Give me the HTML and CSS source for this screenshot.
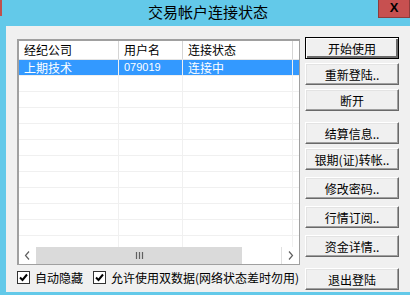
FILE: index.html
```html
<!DOCTYPE html>
<html lang="zh-CN">
<head>
  <meta charset="UTF-8">
  <title>交易帐户连接状态</title>
  <link rel="stylesheet" href="styles.css">
</head>
<body>
  <div class="window">
    <div class="titlebar">
      <span class="edge"></span>
      <span class="title">交易帐户连接状态</span>
      <span class="close">X</span>
    </div>
    <div class="client">
      <div class="main">
        <div class="list">
          <div class="lv-head">
            <span class="cell c1">经纪公司</span>
            <span class="cell c2">用户名</span>
            <span class="cell c3">连接状态</span>
            <span class="cell c4"></span>
          </div>
          <div class="lv-body">
            <div class="lv-row selected">
              <span class="cell c1">上期技术</span>
              <span class="cell c2 num">079019</span>
              <span class="cell c3">连接中</span>
              <span class="cell c4"></span>
            </div>
            <div class="lv-row"><span class="cell c1"></span><span class="cell c2"></span><span class="cell c3"></span><span class="cell c4"></span></div>
            <div class="lv-row"><span class="cell c1"></span><span class="cell c2"></span><span class="cell c3"></span><span class="cell c4"></span></div>
            <div class="lv-row"><span class="cell c1"></span><span class="cell c2"></span><span class="cell c3"></span><span class="cell c4"></span></div>
            <div class="lv-row"><span class="cell c1"></span><span class="cell c2"></span><span class="cell c3"></span><span class="cell c4"></span></div>
            <div class="lv-row"><span class="cell c1"></span><span class="cell c2"></span><span class="cell c3"></span><span class="cell c4"></span></div>
            <div class="lv-row"><span class="cell c1"></span><span class="cell c2"></span><span class="cell c3"></span><span class="cell c4"></span></div>
            <div class="lv-row"><span class="cell c1"></span><span class="cell c2"></span><span class="cell c3"></span><span class="cell c4"></span></div>
            <div class="lv-row"><span class="cell c1"></span><span class="cell c2"></span><span class="cell c3"></span><span class="cell c4"></span></div>
            <div class="lv-row"><span class="cell c1"></span><span class="cell c2"></span><span class="cell c3"></span><span class="cell c4"></span></div>
            <div class="lv-row"><span class="cell c1"></span><span class="cell c2"></span><span class="cell c3"></span><span class="cell c4"></span></div>
            <div class="lv-row"><span class="cell c1"></span><span class="cell c2"></span><span class="cell c3"></span><span class="cell c4"></span></div>
          </div>
          <div class="hscroll">
            <span class="sb-btn">
              <svg width="7" height="9" viewBox="0 0 7 9"><path d="M5 0.5 L1.5 4.5 L5 8.5" fill="none" stroke="#606060" stroke-width="1.2"/></svg>
            </span>
            <span class="sb-thumb">
              <svg width="9" height="7" viewBox="0 0 9 7"><path d="M1.5 0v7M4.5 0v7M7.5 0v7" stroke="#606060" stroke-width="1.2"/></svg>
            </span>
            <span class="sb-track"></span>
            <span class="sb-btn right">
              <svg width="7" height="9" viewBox="0 0 7 9"><path d="M2 0.5 L5.5 4.5 L2 8.5" fill="none" stroke="#606060" stroke-width="1.2"/></svg>
            </span>
          </div>
        </div>
        <div class="options">
          <label class="check">
            <span class="box"><svg width="11" height="11" viewBox="0 0 11 11"><path d="M2 5.5 L4.5 8 L9 2.5" fill="none" stroke="#000" stroke-width="2"/></svg></span>
            自动隐藏
          </label>
          <label class="check">
            <span class="box"><svg width="11" height="11" viewBox="0 0 11 11"><path d="M2 5.5 L4.5 8 L9 2.5" fill="none" stroke="#000" stroke-width="2"/></svg></span>
            允许使用双数据(网络状态差时勿用)
          </label>
        </div>
      </div>
      <div class="buttons">
        <button class="btn default">开始使用</button>
        <button class="btn mt-s">重新登陆..</button>
        <button class="btn mt-s">断开</button>
        <button class="btn mt-l">结算信息..</button>
        <button class="btn mt-s">银期(证)转帐..</button>
        <button class="btn mt-m">修改密码..</button>
        <button class="btn mt-m">行情订阅..</button>
        <button class="btn mt-m">资金详情..</button>
        <button class="btn mt-l">退出登陆</button>
      </div>
    </div>
  </div>
</body>
</html>
```

FILE: styles.css
```css
body {
  margin: 0;
  overflow: hidden;
  font-family: "Noto Sans CJK SC", "Liberation Sans", sans-serif;
  font-size: 12px;
  color: #000;
}

.window {
  width: 410px;
  height: 295px;
  background-color: #63c9e9;
  display: flex;
  flex-direction: column;
}

.titlebar {
  height: 26px;
  flex-shrink: 0;
  display: grid;
  grid-template-columns: 1fr auto 1fr;
  align-items: start;
}

.edge {
  width: 2px;
  height: 16px;
  background-color: #c0504d;
}

.title {
  font-size: 15px;
  line-height: 23px;
  padding-left: 6px;
}

.close {
  justify-self: end;
  width: 32px;
  height: 18px;
  box-sizing: border-box;
  background-color: #c75050;
  border: 1px solid #8c3c3c;
  border-top: none;
  text-align: center;
  font-family: "Liberation Sans", sans-serif;
  font-weight: bold;
  font-size: 13px;
  line-height: 16px;
}

.client {
  flex: 1;
  margin: 0 0 3px 6px;
  background-color: #f0f0f0;
  display: flex;
  gap: 5px;
  padding: 13px 0 0 11px;
}

.main {
  width: 283px;
}

.list {
  height: 226px;
  box-sizing: border-box;
  border: 1px solid #a0a0a0;
  box-shadow: inset 1px 1px #a0a0a0;
  padding: 1px 0 0 1px;
  background-color: #fff;
  display: flex;
  flex-direction: column;
}

.lv-head,
.lv-row {
  display: flex;
  box-sizing: border-box;
}

.lv-head {
  height: 19px;
  border-bottom: 1px solid #e5e5e5;
  line-height: 18px;
}

.lv-head .cell {
  border-right-color: #d5d5d5;
}

.cell {
  box-sizing: border-box;
  padding-left: 5px;
  border-right: 1px solid #f0f0f0;
  white-space: nowrap;
  overflow: hidden;
}

.c1 { width: 100px; }
.c2 { width: 64px; }
.c3 { width: 110px; }
.c4 { flex: 1; border-right: none; }

.lv-body {
  flex: 1;
  overflow: hidden;
}

.lv-row {
  height: 16px;
  border-bottom: 1px solid #f0f0f0;
  line-height: 15px;
}

.lv-row.selected {
  background-color: #3399ff;
  color: #fff;
}

.num {
  font-family: "Liberation Sans", sans-serif;
  font-size: 11px;
}

.hscroll {
  height: 17px;
  flex-shrink: 0;
  display: flex;
  background-color: #f0f0f0;
}

.sb-btn {
  width: 17px;
  display: flex;
  justify-content: center;
  align-items: center;
  background-color: #fff;
}

.sb-btn.right {
  border-left: 1px solid #e0e0e0;
}

.sb-thumb {
  width: 206px;
  display: flex;
  justify-content: center;
  align-items: center;
  background-color: #dadada;
}

.sb-track {
  flex: 1;
  background-color: #fff;
}

.options {
  display: flex;
  align-items: center;
  gap: 10px;
  margin-top: 3px;
  height: 18px;
}

.check {
  display: flex;
  align-items: center;
  gap: 5px;
  white-space: nowrap;
}

.box {
  width: 13px;
  height: 13px;
  box-sizing: border-box;
  border: 1px solid #333;
  background-color: #fff;
  display: flex;
  justify-content: center;
  align-items: center;
}

.buttons {
  display: flex;
  flex-direction: column;
  padding-top: -2px;
  margin-top: -2px;
}

.btn {
  width: 94px;
  height: 22px;
  box-sizing: border-box;
  padding: 0;
  font-family: "Noto Sans CJK SC", sans-serif;
  font-size: 12px;
  color: #000;
  background-color: #f0f0f0;
  border: 1px solid;
  border-color: #fff #696969 #696969 #fff;
  box-shadow: inset -1px -1px #a0a0a0, inset 1px 1px #e3e3e3;
}

.btn.default {
  border-color: #000;
  box-shadow: inset 1px 1px #fff, inset -2px -2px #696969;
}

.mt-s { margin-top: 4px; }
.mt-m { margin-top: 7px; }
.mt-l { margin-top: 11px; }
```
